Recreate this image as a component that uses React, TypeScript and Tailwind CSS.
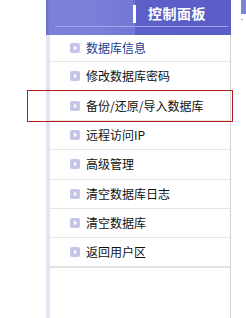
import React from 'react'

const menuItems = [
  '数据库信息',
  '修改数据库密码',
  '备份/还原/导入数据库',
  '远程访问IP',
  '高级管理',
  '清空数据库日志',
  '清空数据库',
  '返回用户区',
]

const ArrowIcon: React.FC = () => (
  <svg width="10" height="10" viewBox="0 0 10 10" className="shrink-0">
    <rect x="0" y="0" width="10" height="10" rx="2" fill="#c5c5e8" />
    <path d="M4 2.5 L7 5 L4 7.5 Z" fill="#ffffff" />
  </svg>
)

export default function App() {
  return (
    <div
      className="relative flex w-[246px] h-[318px] bg-white overflow-hidden"
      style={{ fontFamily: '"Noto Sans CJK SC", "Noto Sans", sans-serif' }}
    >
      <div className="w-[46px] shrink-0" />

      {/* control panel */}
      <div className="flex flex-col w-[185px] shrink-0">
        <div className="relative h-[35px] bg-[linear-gradient(90deg,#6a6ec9_0px,#7c80da_4px,#7a7ed9_60px,#7276d4_89px,#5b5fc7_89px,#5a5ec6_100%)]">
          <div className="flex items-center h-[26px] pl-[87px]">
            <div className="w-[3px] h-[18px] bg-white mt-[1px]" />
            <span className="ml-[12px] text-[14px] font-bold text-white leading-none tracking-[0.5px]">
              控制面板
            </span>
          </div>
          <div className="mx-[9px] mr-[3px] h-px bg-[#a3a6ea]" />
        </div>

        <div className="flex flex-col flex-1 border-l-4 border-l-[#e6e4f4] border-r border-r-[#d3d3d3]">
          {menuItems.map((label, i) => (
            <div
              key={label}
              className={
                i === 0
                  ? 'flex items-center h-[27px] pl-[20px] gap-[6px] border-b border-[#e6e6e6]'
                  : i === menuItems.length - 1
                  ? 'flex items-center h-[29.4px] pl-[20px] gap-[6px] border-b-2 border-[#e3e3e3]'
                  : 'flex items-center h-[29.4px] pl-[20px] gap-[6px] border-b border-[#e6e6e6]'
              }
            >
              <ArrowIcon />
              <span
                className={
                  i === 0
                    ? 'text-[12px] leading-none text-[#1b3b90]'
                    : 'text-[12px] leading-none text-[#111111]'
                }
              >
                {label}
              </span>
            </div>
          ))}
          <div className="flex-1" />
        </div>
      </div>

      {/* edge of the next panel */}
      <div className="ml-[10px] w-[5px] flex flex-col">
        <div className="h-[14px] bg-[#7e82d8]" />
        <div className="mt-[5px] w-[2px] h-[1px] bg-[#b0b0b0]" />
      </div>

      {/* highlight box */}
      <div className="absolute left-[27px] top-[90px] w-[206px] h-[32px] border border-[#b31b1b] pointer-events-none" />
    </div>
  )
}
